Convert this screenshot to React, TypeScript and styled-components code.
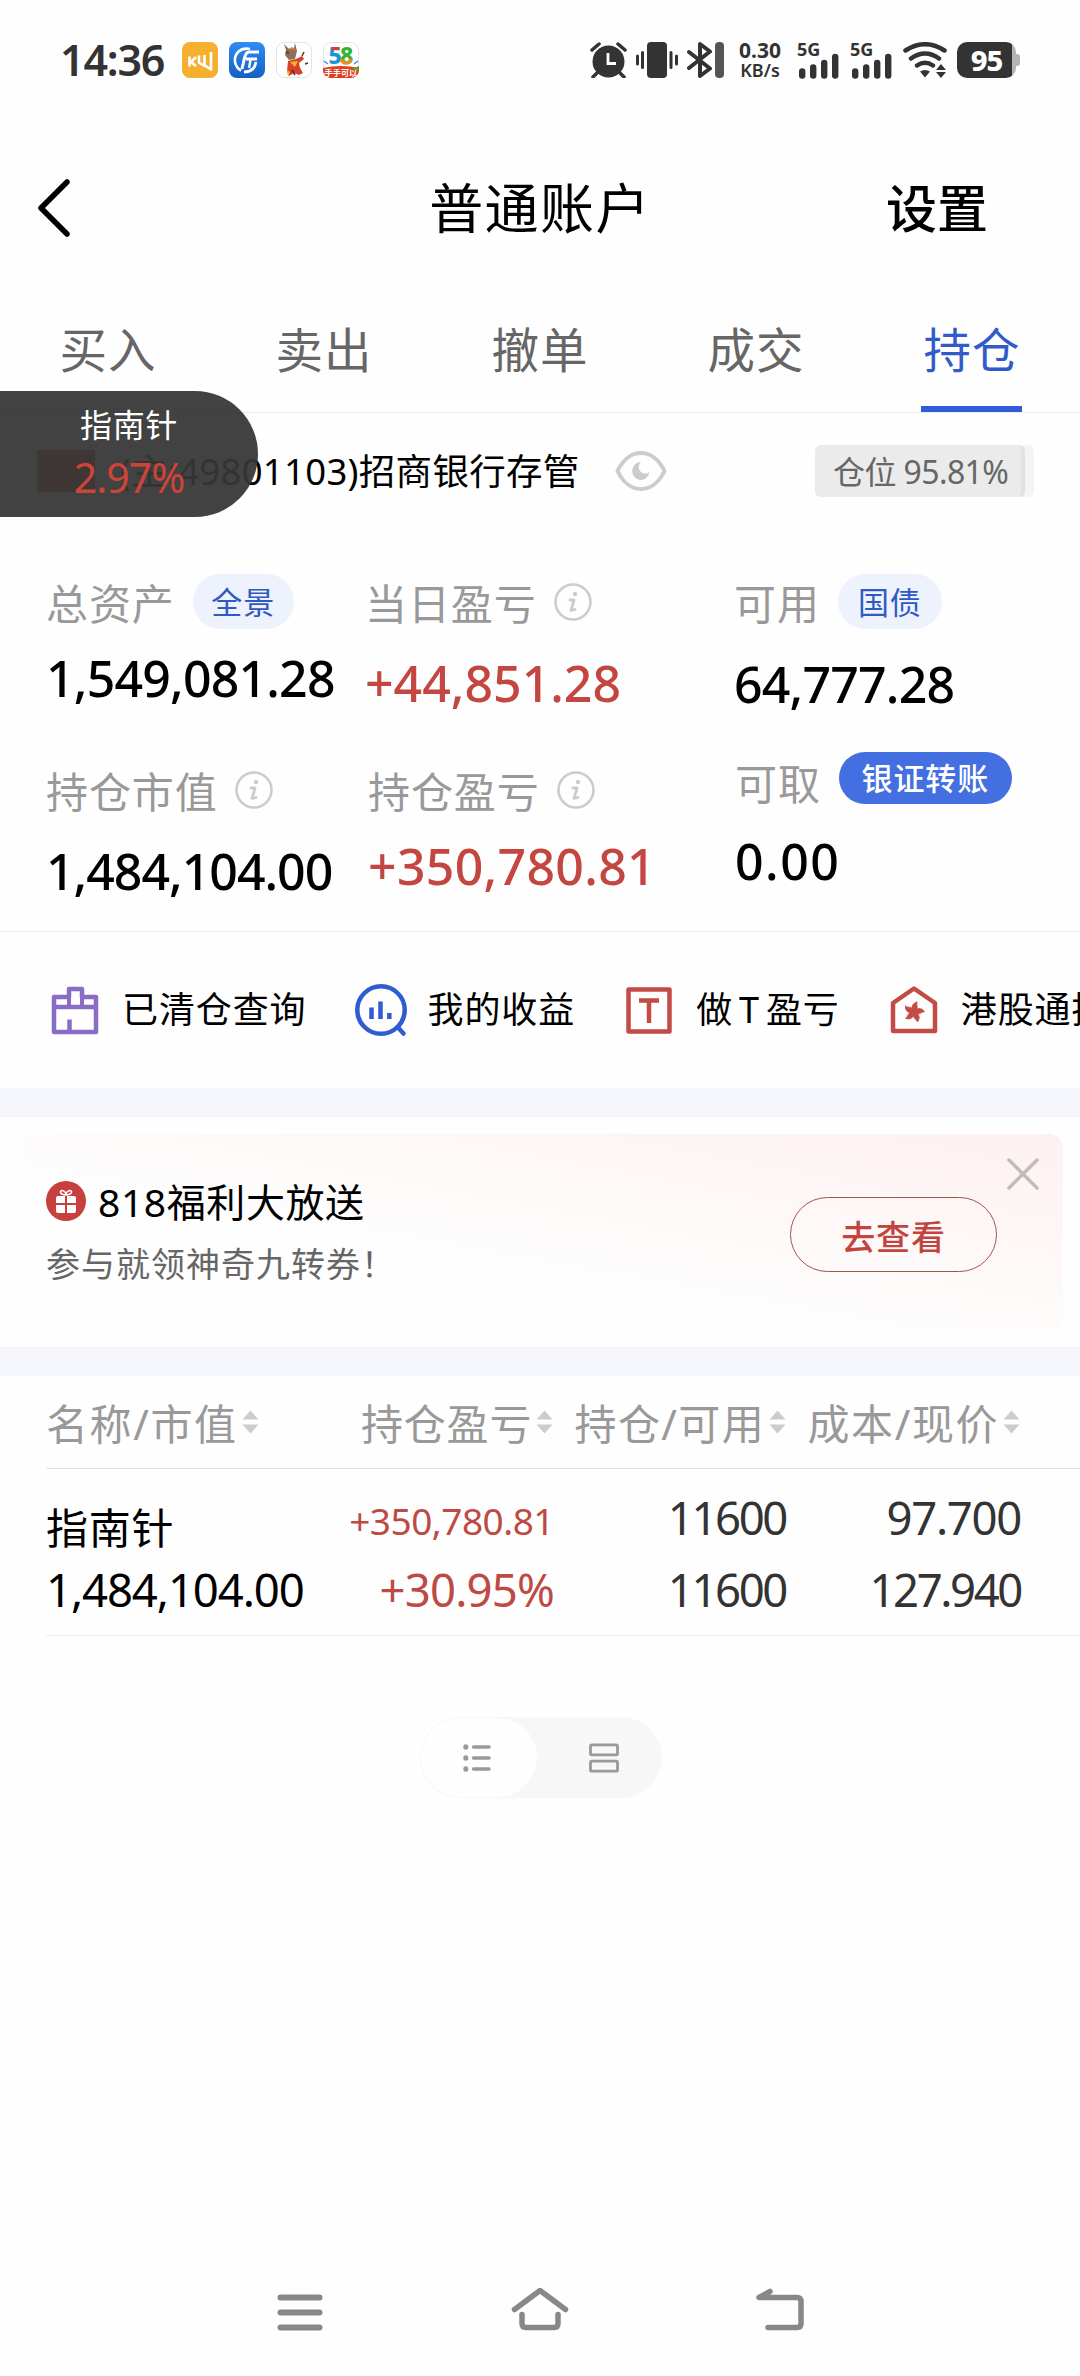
import React, { useState } from 'react';
import styled, { createGlobalStyle } from 'styled-components';

const GlobalStyle = createGlobalStyle`
  * {
    box-sizing: border-box;
  }

  body {
    margin: 0;
    background: #fefefe;
    font-family: "Noto Sans", "Noto Sans CJK SC", sans-serif;
    color: #000;
  }

  svg {
    display: block;
    flex: none;
  }
`;

const Screen = styled.div`
  position: relative;
  display: flex;
  flex-direction: column;
  width: 1080px;
  height: 2376px;
  overflow: hidden;
  white-space: nowrap;
`;

const StatusBar = styled.div`
  display: flex;
  align-items: center;
  height: 120px;
  padding: 0 60px 0 60px;
  color: #333;
`;

const Clock = styled.div`
  width: 122px;
  font-size: 43px;
  font-weight: 600;
  line-height: 60px;
  letter-spacing: -1.2px;
`;

const AppIcons = styled.div`
  display: flex;
  gap: 11px;

  svg {
    overflow: visible;
  }
`;

const StatusIcons = styled.div`
  display: flex;
  align-items: center;
  margin-left: auto;
`;

const NetSpeed = styled.div`
  display: flex;
  flex-direction: column;
  align-items: center;
  width: 48px;
  margin: 0 13px 0 12px;
  font-size: 21px;
  font-weight: 700;
  line-height: 20px;

  span:last-child {
    font-size: 18px;
    font-weight: 600;
  }
`;

const Signal = styled.div`
  width: 43px;
  height: 36px;
  margin-right: 10px;
  font-size: 18px;
  font-weight: 700;
  line-height: 14px;
`;

const Bars = styled.svg`
  margin: -3px 0 0 2px;
`;

const Battery = styled.div`
  display: flex;
  align-items: center;
  width: 63px;
  height: 36px;
  margin-left: 9px;
`;

const BatteryBody = styled.div`
  width: 59px;
  height: 36px;
  border-radius: 10px;
  background: linear-gradient(90deg, #333 55px, #b5b5b5 55px);
  color: #fff;
  font-size: 29px;
  font-weight: 800;
  line-height: 35px;
  letter-spacing: -1px;
  text-align: center;
`;

const BatteryTip = styled.div`
  width: 4px;
  height: 12px;
  border-radius: 0 3px 3px 0;
  background: #b5b5b5;
`;

const Header = styled.div`
  display: grid;
  grid-template-columns: 320px 440px 320px;
  align-items: center;
  height: 176px;
  padding-bottom: 1px;
`;

const BackIcon = styled.svg`
  margin-left: 36px;
`;

const Title = styled.div`
  font-size: 54px;
  line-height: 80px;
  letter-spacing: 1.4px;
  text-align: center;
`;

const Settings = styled.div`
  padding-left: 126px;
  font-size: 51px;
  font-weight: 500;
  line-height: 80px;
`;

const Tabs = styled.div`
  display: grid;
  grid-template-columns: repeat(5, 1fr);
  height: 117px;
  border-bottom: 1px solid #eee;
`;

const Tab = styled.div<{ $active?: boolean }>`
  display: flex;
  flex-direction: column;
  align-items: center;
  justify-content: space-between;
  padding-top: 19px;
  font-size: 47.5px;
  line-height: 70px;
  letter-spacing: 0.9px;
  color: ${props => (props.$active ? '#315bc9' : '#666')};
  cursor: pointer;

  &::after {
    content: '';
    width: 101px;
    height: 6px;
    margin-left: -1px;
    background: ${props => (props.$active ? '#315bd8' : 'transparent')};
  }
`;

const AccountRow = styled.div`
  display: flex;
  align-items: center;
  height: 115px;
  padding: 0 46px 0 37px;
`;

const Flag = styled.div`
  width: 58px;
  height: 42px;
  margin-right: 25px;
  background: #c2452a;
`;

const AccountName = styled.div`
  width: 461px;
  margin-right: 34px;
  font-size: 36.5px;
  line-height: 56px;
  letter-spacing: 0.3px;
`;

const PositionBadge = styled.div`
  width: 219px;
  height: 52px;
  margin-left: auto;
  border-radius: 6px;
  background: #f4f4f4;
`;

const PositionFill = styled.div`
  width: 210px;
  height: 52px;
  padding-left: 18px;
  border-radius: 6px;
  border-right: 4px solid #e2e2e2;
  background: #ebebeb;
  color: #666;
  font-size: 32px;
  line-height: 54px;
  letter-spacing: -0.6px;
`;

const FloatQuote = styled.div`
  position: absolute;
  top: 391px;
  left: 0;
  width: 258px;
  height: 126px;
  padding-top: 9px;
  border-radius: 0 63px 63px 0;
  background: rgba(54, 54, 54, 0.94);
  color: #fff;
  font-size: 32px;
  line-height: 50px;
  letter-spacing: 0.7px;
  text-align: center;
`;

const FloatRate = styled.div`
  height: 56px;
  font-size: 41px;
  line-height: 54px;
  letter-spacing: -1px;
  color: #cf4439;
`;

const Summary = styled.div`
  display: grid;
  grid-template-columns: 319px 368px 1fr;
  height: 404px;
  padding: 48px 0 0 46px;
  border-bottom: 1px solid #eee;
`;

const Metric = styled.div<{ $top?: number; $shift?: number }>`
  margin-top: ${props => props.$top ?? 0}px;
  margin-left: ${props => props.$shift ?? 0}px;
`;

const MetricLabel = styled.div`
  display: flex;
  align-items: center;
  height: 56px;
  font-size: 42px;
  letter-spacing: 0.9px;
  line-height: 58px;
  color: #999;
`;

const MetricValue = styled.div<{ $gap: number; $up?: boolean; $spacing?: number }>`
  margin-top: ${props => props.$gap}px;
  font-size: 50px;
  font-weight: 500;
  line-height: 62px;
  height: 60px;
  letter-spacing: ${props => props.$spacing ?? -0.8}px;
  color: ${props => (props.$up ? '#c34640' : '#000')};
`;

const Pill = styled.div<{ $width: number; $solid?: boolean }>`
  width: ${props => props.$width}px;
  height: ${props => (props.$solid ? 52 : 55)}px;
  margin: 0 0 ${props => (props.$solid ? 12 : 6)}px 18px;
  border-radius: 28px;
  background: ${props => (props.$solid ? '#446fe0' : '#edf2fd')};
  color: ${props => (props.$solid ? '#fff' : '#2f5ac2')};
  font-size: 31px;
  font-weight: ${props => (props.$solid ? 500 : 400)};
  line-height: ${props => (props.$solid ? 52 : 56)}px;
  text-align: center;
`;

const InfoSvg = styled.svg`
  margin: 0 0 4px 17px;
`;

const Shortcuts = styled.div`
  display: flex;
  align-items: center;
  gap: 44px;
  height: 156px;
  padding: 0 0 0 45px;
  overflow: hidden;
`;

const Shortcut = styled.div`
  display: flex;
  flex: none;
  align-items: center;
  gap: 17px;
  font-size: 36px;
  line-height: 58px;
  letter-spacing: 0.9px;
`;

const Latin = styled.span`
  margin: 0 6px;
`;

const Divider = styled.div<{ $height: number }>`
  height: ${props => props.$height}px;
  flex: none;
  background: #f4f6fb;
`;

const PromoWrap = styled.div`
  height: 230px;
  padding: 17px;
`;

const PromoCard = styled.div`
  position: relative;
  display: flex;
  align-items: center;
  justify-content: space-between;
  height: 196px;
  padding: 0 66px 0 29px;
  border-radius: 14px;
  background: linear-gradient(to top right, #fefefe 38%, #fdf1f0 100%);
`;

const PromoTitle = styled.div`
  display: flex;
  align-items: center;
  gap: 12px;
  height: 56px;
  margin-top: -1px;
  font-size: 39px;
  line-height: 56px;
  letter-spacing: 0.6px;

  svg {
    margin-bottom: 3px;
  }
`;

const PromoText = styled.div`
  margin-top: 9px;
  font-size: 34px;
  line-height: 50px;
  letter-spacing: 1px;
  color: #666;
`;

const PromoButton = styled.button`
  width: 207px;
  height: 75px;
  margin-top: 4px;
  padding: 2px 0 0;
  border: 1px solid #a8504c;
  border-radius: 38px;
  background: transparent;
  color: #c2443e;
  font-family: inherit;
  font-size: 34px;
  font-weight: 500;
  letter-spacing: 0.8px;
`;

const CloseIcon = styled.svg`
  position: absolute;
  top: 24px;
  right: 24px;
`;

const TableHead = styled.div`
  display: flex;
  height: 93px;
  margin-left: 46px;
  padding-top: 19px;
  border-bottom: 1px solid #e2e2e2;
`;

const HeadCell = styled.div<{ $width: number; $spacing: number }>`
  display: flex;
  gap: 4px;
  width: ${props => props.$width}px;
  height: 56px;
  font-size: 42px;
  line-height: 58px;
  letter-spacing: ${props => props.$spacing}px;
  color: #999;
`;

const SortSvg = styled.svg`
  margin-top: 15px;
`;

const Row = styled.div`
  display: grid;
  grid-template-columns: 290px 218px 232px 235px;
  height: 167px;
  margin-left: 46px;
  border-bottom: 1px solid #eee;
`;

const Cell = styled.div<{ $tone?: 'up' | 'dark' }>`
  display: flex;
  flex-direction: column;
  align-items: ${props => (props.$tone ? 'flex-end' : 'flex-start')};
  color: ${props => (props.$tone === 'up' ? '#bd4a45' : props.$tone === 'dark' ? '#333' : '#000')};
`;

const CellLine = styled.div<{ $top: number; $size?: number; $spacing?: number }>`
  margin-top: ${props => props.$top}px;
  font-size: ${props => props.$size ?? 45.5}px;
  line-height: 56px;
  letter-spacing: ${props => props.$spacing ?? -0.8}px;
`;

const ViewToggle = styled.div`
  display: flex;
  flex: none;
  align-self: center;
  width: 242px;
  height: 81px;
  margin: 81px 0 0 1px;
  padding: 1px;
  border-radius: 41px;
  background: #f7f7f7;
`;

const ToggleItem = styled.div<{ $active?: boolean }>`
  display: flex;
  align-items: center;
  justify-content: center;
  width: ${props => (props.$active ? 116 : 124)}px;
  padding: 0 ${props => (props.$active ? 4 : 0)}px 0 ${props => (props.$active ? 0 : 10)}px;
  height: 79px;
  border-radius: 40px;
  background: ${props => (props.$active ? '#fefefe' : 'transparent')};
`;

const NavBar = styled.div`
  display: flex;
  justify-content: space-between;
  align-items: center;
  margin-top: auto;
  height: 130px;
  padding: 0 270px;
`;

const InfoIcon = () => (
  <InfoSvg width="38" height="38" viewBox="0 0 38 38" fill="none" stroke="#ccc">
    <circle cx="19" cy="19" r="17.5" strokeWidth="2.6" />
    <circle cx="21" cy="11" r="2.2" fill="#ccc" stroke="none" />
    <path d="M16 17h4l-3 10.500l4-1" strokeWidth="2.8" strokeLinejoin="round" strokeLinecap="round" />
  </InfoSvg>
);

const SortIcon = () => (
  <SortSvg width="17" height="24" viewBox="0 0 17 24" fill="#ccc">
    <path d="M8.500 0.500L16.500 9.500H0.500zM8.500 23.500L16.500 14.500H0.500z" />
  </SortSvg>
);

const AppIconSet = () => (
  <AppIcons>
    <svg width="36" height="36" viewBox="0 0 36 36">
      <rect width="36" height="36" rx="8" fill="#f5b030" />
      <path d="M7.500 14.500v10M14 15l-5 5l5 4M17 13.500v7l5.500 3.500V13M29 10v17.500l-6-4" fill="none" stroke="#fff" strokeWidth="2.600" strokeLinejoin="round" />
    </svg>
    <svg width="36" height="36" viewBox="0 0 36 36">
      <defs>
        <linearGradient id="blue" x1="0" y1="0" x2="0" y2="1">
          <stop offset="0" stopColor="#2f8bf5" />
          <stop offset="1" stopColor="#1360c4" />
        </linearGradient>
      </defs>
      <rect width="36" height="36" rx="8" fill="url(#blue)" />
      <g fill="none" stroke="#fff">
        <path d="M21 7C11 5 5 12 6 20c1 5 3 7 6 8.500" strokeWidth="2.600" />
        <path d="M30 10H20c-3 0-4 3-5 8l-2 9M28 17H17" strokeWidth="3" />
        <path d="M27 20c-1 6-4 10-12 10" strokeWidth="2.800" />
        <path d="M21.500 18l-1.500 8" strokeWidth="2.500" />
      </g>
    </svg>
    <svg width="36" height="36" viewBox="0 0 36 36">
      <rect x="0.500" y="0.500" width="35" height="35" rx="8" fill="#fff" stroke="#e4e4e4" />
      <path d="M10 8l-2-6l5 5l5-1l1-5l2 8l-2 8l-6 1l-4-5z" fill="#8d6f5c" />
      <path d="M12 7l4-2l4 3z" fill="#d98a2c" />
      <path d="M12 19l8-2l6-3l2 3l-5 4l1 5l3 5l-4 2l-5-2l-5 3l-2-5z" fill="#d9402a" />
      <path d="M14 20l5 5l3-6zM11 28l3 2l-2 5z" fill="#f2b52e" />
      <path d="M16 28l3 5M26 14l2-4M29 22l3-1M10 10l3 1" stroke="#5a2c1c" strokeWidth="1.500" />
    </svg>
    <svg width="36" height="36" viewBox="0 0 36 36">
      <defs>
        <clipPath id="round">
          <rect width="36" height="36" rx="8" />
        </clipPath>
      </defs>
      <rect x="0.500" y="0.500" width="35" height="35" rx="8" fill="#fff" stroke="#e4e4e4" />
      <g clipPath="url(#round)">
        <path d="M0 26q18-4 36 0v10H0z" fill="#df3d22" />
        <path d="M28 27l8-3v5z" fill="#5aa02c" />
      </g>
      <path d="M1 19l4 3M35 19l-4 3" stroke="#3f8fe0" strokeWidth="1.500" />
      <text x="5.500" y="21.500" fontSize="23" fontWeight="800" fill="#1797d6">5</text>
      <text x="17" y="21.500" fontSize="23" fontWeight="800" fill="#35b234">8</text>
      <path d="M18.500 17a4.500 4 0 0 0 9 0" fill="none" stroke="#f28a1c" strokeWidth="3.500" />
      <path d="M8.500 6.500h7.500" stroke="#e23a2c" strokeWidth="3" />
      <text x="1.500" y="34" fontSize="8.200" fontWeight="700" fill="#fff">手手可以</text>
    </svg>
  </AppIcons>
);

const SignalBars = () => (
  <Signal>
    5G
    <Bars width="40" height="26" viewBox="0 0 40 26" stroke="#333" strokeWidth="6.400" strokeLinecap="round">
      <path d="M3.200 18.500v4M14.200 14.500v8M25.200 10v12.500M36.200 4v18.500" />
    </Bars>
  </Signal>
);

const shortcuts = [
  {
    key: 'cleared',
    label: '已清仓查询',
    icon: (
      <g stroke="#8a6cc6" strokeWidth="4.500">
        <path d="M9 17h15V9h13v8h14v35H9zM9 27h42M24.500 52V39.500" />
        <path d="M24 17v8M37 17v8" strokeWidth="4" />
      </g>
    ),
  },
  {
    key: 'profit',
    label: '我的收益',
    icon: (
      <g stroke="#315bd0" strokeWidth="4.500">
        <circle cx="30" cy="30" r="23.700" />
        <path d="M46.500 47l6 6.500" strokeLinecap="round" />
        <path d="M20.500 27.500V39M29.500 21.500V39M38.300 33v6" strokeLinecap="butt" />
      </g>
    ),
  },
  {
    key: 'day-trade',
    label: (
      <span>
        做<Latin>T</Latin>盈亏
      </span>
    ),
    icon: (
      <g stroke="#c24b46" strokeWidth="4.500">
        <path d="M9.500 9.500h41v42h-41z" />
        <path d="M20 20.500h20M30 20.500V43" strokeLinejoin="miter" />
      </g>
    ),
  },
  {
    key: 'hk-connect',
    label: '港股通持仓',
    icon: (
      <g stroke="#c24b46" strokeWidth="4.500">
        <path d="M9 23L30 8.500L51 23v28H9z" />
        {[0, 72, 144, 216, 288].map(angle => (
          <path
            key={angle}
            d="M30 32c-4-3-4-8 1-10.500c-1 3 4 6-1 10.500z"
            transform={`rotate(${angle + 12} 30 32)`}
            fill="#c24b46"
            strokeWidth="0.800"
          />
        ))}
      </g>
    ),
  },
];

const columns = [
  { label: '名称/市值', width: 315, spacing: 1.6 },
  { label: '持仓盈亏', width: 213.5, spacing: 0.8 },
  { label: '持仓/可用', width: 233, spacing: 1.4 },
  { label: '成本/现价', width: 240, spacing: 1.6 },
];

const tabs = ['买入', '卖出', '撤单', '成交', '持仓'];

export default function App() {
  const [activeTab, setActiveTab] = useState('持仓');

  return (
    <Screen>
      <GlobalStyle />
      <StatusBar>
        <Clock>14:36</Clock>
        <AppIconSet />
        <StatusIcons>
          <svg width="38" height="36" viewBox="0 0 38 36">
            <circle cx="18.500" cy="19.500" r="16" fill="#333" />
            <path d="M2 8l7-6M35 8l-7-6M7 31l-4 4M30 31l4 4" stroke="#333" strokeWidth="3.500" strokeLinecap="round" />
            <path d="M18 11v10.500h8" fill="none" stroke="#fff" strokeWidth="2.800" />
          </svg>
          <svg width="52" height="36" viewBox="0 0 52 36" stroke="#333" strokeWidth="3" strokeLinecap="round">
            <rect x="19" width="20" height="36" rx="4" fill="#333" stroke="none" />
            <path d="M9.500 14v8M14.500 10.500v15M43 10.500v15M48.500 14v8" />
          </svg>
          <svg width="44" height="36" viewBox="0 0 44 36">
            <path d="M10 10l21 16.500l-10 7.500V2l10 7.500L10 26" transform="translate(-1 0)" fill="none" stroke="#333" strokeWidth="4" strokeLinejoin="round" strokeLinecap="round" />
            <rect x="35" width="9" height="36" rx="4" fill="#555" />
          </svg>
          <NetSpeed>
            <span>0.30</span>
            <span>KB/s</span>
          </NetSpeed>
          <SignalBars />
          <SignalBars />
          <svg width="45" height="36" viewBox="0 0 45 36" fill="none" stroke="#333" strokeWidth="4.500" strokeLinecap="round">
            <path d="M2.500 8.500Q22 -4 41.500 8.500M8 16.500Q22 6.500 36 16.500M14 23.500Q22 18 30 23.500" />
            <path d="M17 29.500q5-3 10 0l-5 6z" fill="#333" stroke="none" />
            <path d="M38 22l5 6H33zM38 36l5-6H33z" fill="#333" stroke="none" />
          </svg>
          <Battery>
            <BatteryBody>95</BatteryBody>
            <BatteryTip />
          </Battery>
        </StatusIcons>
      </StatusBar>

      <Header>
        <BackIcon width="36" height="60" viewBox="0 0 36 60" fill="none" stroke="#000" strokeWidth="5.500" strokeLinecap="round" strokeLinejoin="round">
          <path d="M31 4L5 30L31 56" />
        </BackIcon>
        <Title>普通账户</Title>
        <Settings>设置</Settings>
      </Header>

      <Tabs>
        {tabs.map(tab => (
          <Tab key={tab} $active={tab === activeTab} onClick={() => setActiveTab(tab)}>
            {tab}
          </Tab>
        ))}
      </Tabs>

      <AccountRow>
        <Flag />
        <AccountName>(主:49801103)招商银行存管</AccountName>
        <svg width="52" height="40" viewBox="0 0 52 40">
          <path d="M2.500 20C14 -4 38 -4 49.500 20C38 44 14 44 2.500 20z" fill="none" stroke="#ccc" strokeWidth="4" strokeLinejoin="round" />
          <path d="M26 11a8.700 9 0 1 0 8.500 10a6 6 0 0 1-8.500-10z" fill="#ccc" />
        </svg>
        <PositionBadge>
          <PositionFill>仓位 95.81%</PositionFill>
        </PositionBadge>
      </AccountRow>

      <Summary>
        <div>
          <Metric>
            <MetricLabel>
              总资产
              <Pill $width={101}>全景</Pill>
            </MetricLabel>
            <MetricValue $gap={15}>1,549,081.28</MetricValue>
          </Metric>
          <Metric $top={57}>
            <MetricLabel>
              持仓市值
              <InfoIcon />
            </MetricLabel>
            <MetricValue $gap={20} $spacing={-1}>1,484,104.00</MetricValue>
          </Metric>
        </div>
        <div>
          <Metric>
            <MetricLabel>
              当日盈亏
              <InfoIcon />
            </MetricLabel>
            <MetricValue $gap={20} $spacing={0} $up>+44,851.28</MetricValue>
          </Metric>
          <Metric $top={52} $shift={3}>
            <MetricLabel>
              持仓盈亏
              <InfoIcon />
            </MetricLabel>
            <MetricValue $gap={15} $spacing={0.3} $up>+350,780.81</MetricValue>
          </Metric>
        </div>
        <div>
          <Metric $shift={1}>
            <MetricLabel>
              可用
              <Pill $width={104}>国债</Pill>
            </MetricLabel>
            <MetricValue $gap={21}>64,777.28</MetricValue>
          </Metric>
          <Metric $top={43} $shift={2}>
            <MetricLabel>
              可取
              <Pill $width={173} $solid>银证转账</Pill>
            </MetricLabel>
            <MetricValue $gap={18} $spacing={1.5}>0.00</MetricValue>
          </Metric>
        </div>
      </Summary>

      <Shortcuts>
        {shortcuts.map(item => (
          <Shortcut key={item.key}>
            <svg width="60" height="60" viewBox="0 0 60 60" fill="none" strokeLinejoin="round">
              {item.icon}
            </svg>
            {item.label}
          </Shortcut>
        ))}
      </Shortcuts>

      <Divider $height={29} />
      <PromoWrap>
        <PromoCard>
          <div>
            <PromoTitle>
              <svg width="40" height="40" viewBox="0 0 40 40">
                <circle cx="20" cy="20" r="20" fill="#c8403d" />
                <path d="M10 17a2 2 0 0 1 2-2h7v7h-9zM21 15h7a2 2 0 0 1 2 2v5h-9zM10 24h9v8h-7a2 2 0 0 1-2-2zM21 24h9v6a2 2 0 0 1-2 2h-7z" fill="#fff" />
                <path d="M20 14c-6 0-7-4-4-4.500c2 0 4 2 4 4.500c0-2.500 2-4.500 4-4.500c3 0.500 2 4.500-4 4.500z" fill="none" stroke="#fff" strokeWidth="1.500" />
              </svg>
              818福利大放送
            </PromoTitle>
            <PromoText>参与就领神奇九转券！</PromoText>
          </div>
          <PromoButton>去查看</PromoButton>
          <CloseIcon width="32" height="32" viewBox="0 0 32 32" stroke="#bfbcbb" strokeWidth="3.500" strokeLinecap="round">
            <path d="M2 2l28 28M30 2L2 30" />
          </CloseIcon>
        </PromoCard>
      </PromoWrap>
      <Divider $height={29} />

      <TableHead>
        {columns.map(column => (
          <HeadCell key={column.label} $width={column.width} $spacing={column.spacing}>
            {column.label}
            <SortIcon />
          </HeadCell>
        ))}
      </TableHead>
      <Row>
        <Cell>
          <CellLine $top={31} $size={42} $spacing={0.8}>指南针</CellLine>
          <CellLine $top={5} $spacing={-1.1}>1,484,104.00</CellLine>
        </Cell>
        <Cell $tone="up">
          <CellLine $top={24} $size={37} $spacing={-0.5}>+350,780.81</CellLine>
          <CellLine $top={12}>+30.95%</CellLine>
        </Cell>
        <Cell $tone="dark">
          <CellLine $top={20} $spacing={-2.4}>11600</CellLine>
          <CellLine $top={16} $spacing={-2.4}>11600</CellLine>
        </Cell>
        <Cell $tone="dark">
          <CellLine $top={20} $spacing={-1.3}>97.700</CellLine>
          <CellLine $top={16} $spacing={-2.4}>127.940</CellLine>
        </Cell>
      </Row>

      <ViewToggle>
        <ToggleItem $active>
          <svg width="28" height="30" viewBox="0 0 28 30" stroke="#999" strokeWidth="3.500" strokeLinecap="round">
            <path d="M10.500 4h15.500M10.500 15h15.500M10.500 26h15.500" />
            <path d="M2.800 3.700v0.600M2.800 14.700v0.600M2.800 25.700v0.600" strokeWidth="5" />
          </svg>
        </ToggleItem>
        <ToggleItem>
          <svg width="30" height="30" viewBox="0 0 30 30" fill="none" stroke="#999" strokeWidth="2.800">
            <rect x="1.500" y="1.800" width="27" height="10" rx="1.500" />
            <rect x="1.500" y="18.200" width="27" height="10" rx="1.500" />
          </svg>
        </ToggleItem>
      </ViewToggle>

      <NavBar>
        <svg width="60" height="48" viewBox="0 0 60 48" stroke="#888" strokeWidth="6" strokeLinecap="round">
          <path d="M10.500 10.500h39M10.500 25.500h39M10.500 40.500h39" />
        </svg>
        <svg width="60" height="48" viewBox="0 0 60 48" fill="none" stroke="#888" strokeWidth="5.500" strokeLinecap="round" strokeLinejoin="round">
          <path d="M4.500 22.500L30 3.500L55.500 22.500" />
          <path d="M12 27.500v9q0 4 4 4h28q4 0 4-4v-9" />
        </svg>
        <svg width="60" height="48" viewBox="0 0 60 48" fill="none" stroke="#888" strokeWidth="5.500" strokeLinecap="round" strokeLinejoin="round">
          <path d="M20 4.500L9 10.500h38q4 0 4 4v22q0 4-4 4H18" />
        </svg>
      </NavBar>

      <FloatQuote>
        指南针
        <FloatRate>2.97%</FloatRate>
      </FloatQuote>
    </Screen>
  );
}
